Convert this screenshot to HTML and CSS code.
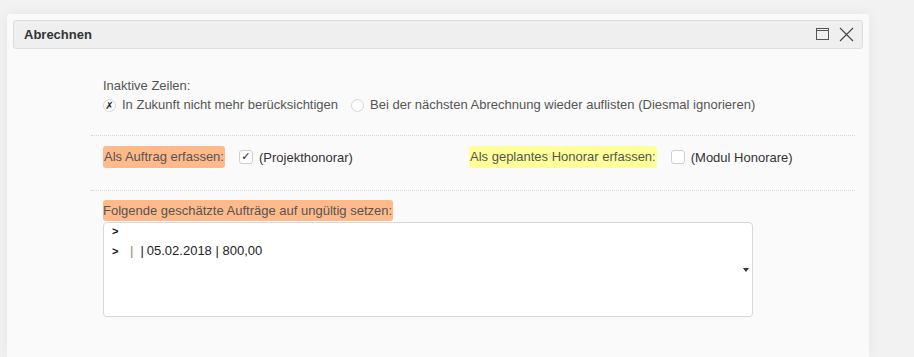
FILE: index.html
```html
<!DOCTYPE html>
<html lang="de">
<head>
<meta charset="utf-8">
<title>Abrechnen</title>
<link rel="stylesheet" href="styles.css">
</head>
<body>
<div class="backdrop">
  <div class="dialog">
    <div class="titlebar">
      <span class="title">Abrechnen</span>
      <div class="tools">
        <svg class="ico" width="13" height="13" viewBox="0 0 13 13"><rect x="0.5" y="0.5" width="12" height="11" fill="none" stroke="#555" stroke-width="1"/><line x1="0.5" y1="2.5" x2="12.5" y2="2.5" stroke="#555" stroke-width="1"/></svg>
        <svg class="ico" width="15" height="15" viewBox="0 0 15 15"><path d="M1 1L14 14M14 1L1 14" stroke="#444" stroke-width="1.1" fill="none"/></svg>
      </div>
    </div>
    <div class="form">
      <div class="section first">
        <div class="label-line">Inaktive Zeilen:</div>
        <div class="radios">
          <span class="opt"><span class="radio on">✗</span>In Zukunft nicht mehr berücksichtigen</span>
          <span class="opt"><span class="radio"></span>Bei der nächsten Abrechnung wieder auflisten (Diesmal ignorieren)</span>
        </div>
      </div>
      <div class="section row2">
        <div class="field f1">
          <span class="hl orange">Als Auftrag erfassen:</span>
          <span class="check on">✓</span><span class="txt">(Projekthonorar)</span>
        </div>
        <div class="field f2">
          <span class="hl yellow">Als geplantes Honorar erfassen:</span>
          <span class="check"></span><span class="txt">(Modul Honorare)</span>
        </div>
      </div>
      <div class="section last">
        <span class="hl orange big">Folgende geschätzte Aufträge auf ungültig setzen:</span>
        <div class="listbox">
          <div class="item"><span class="chev">&gt;</span></div>
          <div class="item"><span class="chev">&gt;</span><span class="pipe">|</span><span class="pipe2">|</span>05.02.2018 | 800,00</div>
          <span class="arrow"></span>
        </div>
      </div>
    </div>
  </div>
</div>
</body>
</html>
```
FILE: styles.css
```css
html, body {
  margin: 0;
  padding: 0;
  height: 100%;
  overflow: hidden;
}
body {
  background: #f2f2f2;
  font-family: "Liberation Sans", Arial, Helvetica, sans-serif;
  font-size: 13px;
  color: #555;
}
.backdrop {
  padding: 14px 0 0 7px;
  height: 100%;
  box-sizing: border-box;
}
.dialog {
  width: 862px;
  height: 100%;
  background: #fafafa;
  box-shadow: 0 0 14px rgba(0,0,0,0.06);
  padding-top: 6px;
  box-sizing: border-box;
  border-radius: 2px 2px 0 0;
}
.titlebar {
  margin: 0 6px;
  height: 29px;
  box-sizing: border-box;
  border: 1px solid #dedede;
  border-radius: 3px;
  background: #efefef;
  display: flex;
  align-items: center;
  padding: 0 8px 0 10px;
}
.title {
  font-weight: bold;
  color: #333;
  flex: 1;
}
.tools {
  display: flex;
  align-items: center;
  gap: 10px;
}
.ico { display: block; }
.form {
  margin-left: 84px;
  width: 764px;
}
.section {
  padding-left: 12px;
  border-bottom: 1px dotted #d4d4d4;
}
.section.first {
  padding-top: 28px;
  height: 87px;
  box-sizing: border-box;
}
.label-line {
  line-height: 18px;
}
.radios {
  display: flex;
  gap: 13px;
  line-height: 18px;
  margin-top: 1px;
}
.opt {
  display: flex;
  align-items: center;
}
.radio {
  width: 11px;
  height: 11px;
  border: 1px solid #d6d6d6;
  border-radius: 50%;
  background: #fff;
  margin-right: 6px;
  font-size: 10px;
  line-height: 11px;
  text-align: center;
  color: #222;
  font-family: "DejaVu Sans", sans-serif;
}
.radio.on { font-style: italic; }
.section.row2 {
  display: flex;
  align-items: center;
  height: 55px;
  box-sizing: border-box;
  padding-bottom: 12px;
}
.field {
  display: flex;
  align-items: center;
}
.f1 { width: 366px; }
.hl {
  padding: 2px 1px;
  border-radius: 3px;
  line-height: 18px;
}
.orange { background: #ffba8c; }
.yellow { background: #ffff9a; }
.check {
  width: 12px;
  height: 12px;
  border: 1px solid #d0d0d0;
  border-radius: 3px;
  background: #fff;
  margin: 0 6px 0 14px;
  font-size: 11px;
  line-height: 12px;
  text-align: center;
  color: #222;
  font-family: "DejaVu Sans", sans-serif;
}
.txt { color: #333; }
.section.last {
  border-bottom: none;
  padding-top: 9px;
}
.big {
  display: inline-block;
  padding: 2px 1px 1px 0;
}
.listbox {
  position: relative;
  margin-top: 1px;
  width: 650px;
  height: 95px;
  box-sizing: border-box;
  background: #fff;
  border: 1px solid #d8d8d8;
  border-radius: 4px;
  padding: 0 0 0 8px;
  color: #222;
  font-size: 13px;
}
.item {
  line-height: 16px;
  padding-bottom: 4px;
  display: flex;
}
.chev {
  font-weight: bold;
  font-size: 11px;
  width: 18px;
  color: #111;
}
.pipe {
  color: #888;
  margin-right: 7px;
}
.pipe2 {
  margin-right: 3px;
}
.arrow {
  position: absolute;
  right: 3px;
  top: 45px;
  width: 0;
  height: 0;
  border-left: 3px solid transparent;
  border-right: 3px solid transparent;
  border-top: 4px solid #333;
}
```
